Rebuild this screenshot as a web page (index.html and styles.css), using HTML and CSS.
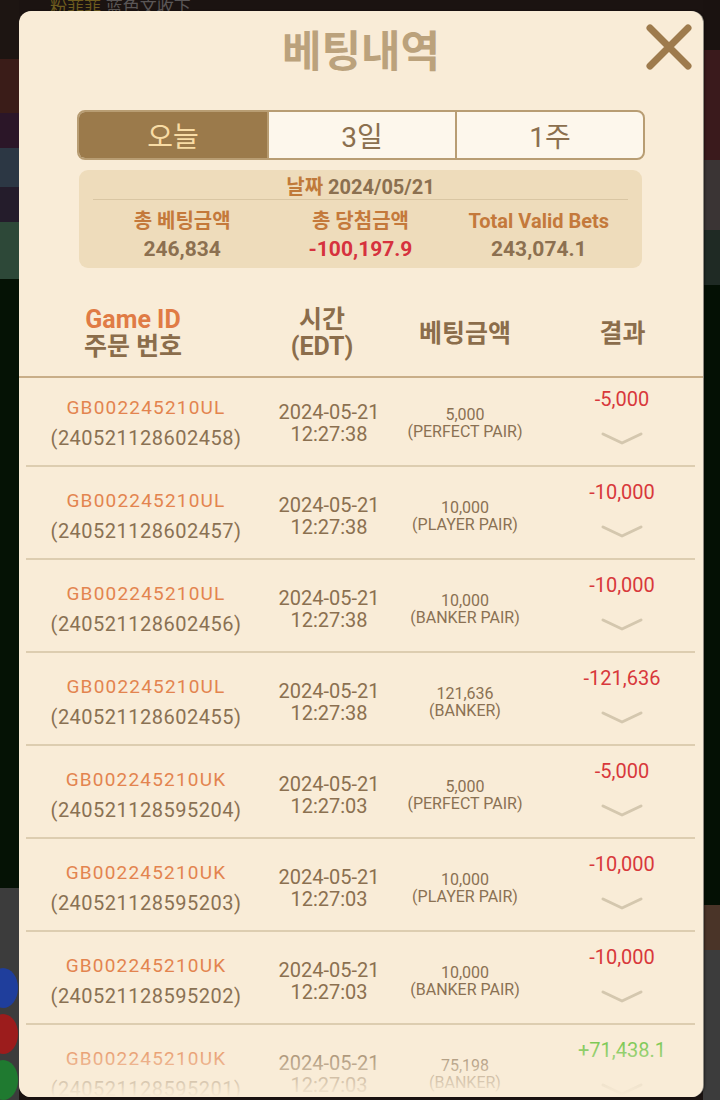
FILE: index.html
```html
<!DOCTYPE html>
<html lang="ko">
<head>
<meta charset="utf-8">
<title>베팅내역</title>
<link rel="stylesheet" href="styles.css">
</head>
<body>
<div class="backdrop">
  <div class="strip strip-left">
    <div class="b b1"></div><div class="b b2"></div><div class="b b3"></div><div class="b b4"></div><div class="b b5"></div><div class="b b6"></div><div class="b b7"></div>
    <div class="b b8">
      <span class="dot dot-blue"></span><span class="dot dot-red"></span><span class="dot dot-green"></span>
    </div>
  </div>
  <div class="strip strip-mid">
    <div class="topline"><span class="cn-yellow">粉菲菲</span> <span class="cn-grey">蓝色文收下</span></div>
  </div>
  <div class="strip strip-right">
    <div class="r r1"></div><div class="r r2"></div><div class="r r3"></div><div class="r r4"></div><div class="r r5"></div><div class="r r6"></div><div class="r r7"></div>
  </div>
</div>

<div class="modal">
  <div class="title">베팅내역</div>
  <button class="close" aria-label="close">
    <svg width="48" height="48" viewBox="0 0 48 48"><path d="M5 5 L43 43 M43 5 L5 43" stroke="#9e7b4d" stroke-width="7" stroke-linecap="round" fill="none"/></svg>
  </button>

  <div class="tabs">
    <div class="tab active">오늘</div>
    <div class="tab">3일</div>
    <div class="tab">1주</div>
  </div>

  <div class="summary">
    <div class="sum-date"><span class="lbl">날짜</span> <span class="val">2024/05/21</span></div>
    <div class="sum-grid">
      <div class="lbl">총 베팅금액</div>
      <div class="lbl">총 당첨금액</div>
      <div class="lbl">Total Valid Bets</div>
      <div class="val">246,834</div>
      <div class="val neg">-100,197.9</div>
      <div class="val">243,074.1</div>
    </div>
  </div>

  <div class="thead">
    <div class="th"><span class="orange">Game ID</span><span>주문 번호</span></div>
    <div class="th"><span>시간</span><span>(EDT)</span></div>
    <div class="th"><span>베팅금액</span></div>
    <div class="th th-res"><span>결과</span></div>
  </div>

  <div class="list">
    <div class="list-inner">
      <div class="row">
        <div class="c1"><span class="gid">GB002245210UL</span><span class="oid">(240521128602458)</span></div>
        <div class="c2"><span>2024-05-21</span><span>12:27:38</span></div>
        <div class="c3"><span>5,000</span><span>(PERFECT PAIR)</span></div>
        <div class="c4"><span class="res neg">-5,000</span><svg class="chev" width="42" height="13" viewBox="0 0 42 13"><path d="M2 2 L21 11 L40 2" stroke="#d4c7ae" stroke-width="3" fill="none" stroke-linecap="round" stroke-linejoin="round"/></svg></div>
      </div>
      <div class="row">
        <div class="c1"><span class="gid">GB002245210UL</span><span class="oid">(240521128602457)</span></div>
        <div class="c2"><span>2024-05-21</span><span>12:27:38</span></div>
        <div class="c3"><span>10,000</span><span>(PLAYER PAIR)</span></div>
        <div class="c4"><span class="res neg">-10,000</span><svg class="chev" width="42" height="13" viewBox="0 0 42 13"><path d="M2 2 L21 11 L40 2" stroke="#d4c7ae" stroke-width="3" fill="none" stroke-linecap="round" stroke-linejoin="round"/></svg></div>
      </div>
      <div class="row">
        <div class="c1"><span class="gid">GB002245210UL</span><span class="oid">(240521128602456)</span></div>
        <div class="c2"><span>2024-05-21</span><span>12:27:38</span></div>
        <div class="c3"><span>10,000</span><span>(BANKER PAIR)</span></div>
        <div class="c4"><span class="res neg">-10,000</span><svg class="chev" width="42" height="13" viewBox="0 0 42 13"><path d="M2 2 L21 11 L40 2" stroke="#d4c7ae" stroke-width="3" fill="none" stroke-linecap="round" stroke-linejoin="round"/></svg></div>
      </div>
      <div class="row">
        <div class="c1"><span class="gid">GB002245210UL</span><span class="oid">(240521128602455)</span></div>
        <div class="c2"><span>2024-05-21</span><span>12:27:38</span></div>
        <div class="c3"><span>121,636</span><span>(BANKER)</span></div>
        <div class="c4"><span class="res neg">-121,636</span><svg class="chev" width="42" height="13" viewBox="0 0 42 13"><path d="M2 2 L21 11 L40 2" stroke="#d4c7ae" stroke-width="3" fill="none" stroke-linecap="round" stroke-linejoin="round"/></svg></div>
      </div>
      <div class="row">
        <div class="c1"><span class="gid">GB002245210UK</span><span class="oid">(240521128595204)</span></div>
        <div class="c2"><span>2024-05-21</span><span>12:27:03</span></div>
        <div class="c3"><span>5,000</span><span>(PERFECT PAIR)</span></div>
        <div class="c4"><span class="res neg">-5,000</span><svg class="chev" width="42" height="13" viewBox="0 0 42 13"><path d="M2 2 L21 11 L40 2" stroke="#d4c7ae" stroke-width="3" fill="none" stroke-linecap="round" stroke-linejoin="round"/></svg></div>
      </div>
      <div class="row">
        <div class="c1"><span class="gid">GB002245210UK</span><span class="oid">(240521128595203)</span></div>
        <div class="c2"><span>2024-05-21</span><span>12:27:03</span></div>
        <div class="c3"><span>10,000</span><span>(PLAYER PAIR)</span></div>
        <div class="c4"><span class="res neg">-10,000</span><svg class="chev" width="42" height="13" viewBox="0 0 42 13"><path d="M2 2 L21 11 L40 2" stroke="#d4c7ae" stroke-width="3" fill="none" stroke-linecap="round" stroke-linejoin="round"/></svg></div>
      </div>
      <div class="row">
        <div class="c1"><span class="gid">GB002245210UK</span><span class="oid">(240521128595202)</span></div>
        <div class="c2"><span>2024-05-21</span><span>12:27:03</span></div>
        <div class="c3"><span>10,000</span><span>(BANKER PAIR)</span></div>
        <div class="c4"><span class="res neg">-10,000</span><svg class="chev" width="42" height="13" viewBox="0 0 42 13"><path d="M2 2 L21 11 L40 2" stroke="#d4c7ae" stroke-width="3" fill="none" stroke-linecap="round" stroke-linejoin="round"/></svg></div>
      </div>
      <div class="row">
        <div class="c1"><span class="gid">GB002245210UK</span><span class="oid">(240521128595201)</span></div>
        <div class="c2"><span>2024-05-21</span><span>12:27:03</span></div>
        <div class="c3"><span>75,198</span><span>(BANKER)</span></div>
        <div class="c4"><span class="res pos">+71,438.1</span><svg class="chev" width="42" height="13" viewBox="0 0 42 13"><path d="M2 2 L21 11 L40 2" stroke="#d4c7ae" stroke-width="3" fill="none" stroke-linecap="round" stroke-linejoin="round"/></svg></div>
      </div>
    </div>
  </div>
  <div class="fade"></div>
</div>
</body>
</html>
```

FILE: styles.css
```css
* { box-sizing: border-box; }
html, body { margin: 0; padding: 0; }
body {
  width: 720px;
  height: 1100px;
  overflow: hidden;
  position: relative;
  background: #061206;
  font-family: Roboto, "Noto Sans CJK KR", "Noto Sans", sans-serif;
}

/* ---------- blurred game backdrop ---------- */
.backdrop {
  display: flex;
  width: 720px;
  height: 1100px;
}
.strip { display: flex; flex-direction: column; }
.strip-left { width: 19px; }
.strip-mid { flex: 1; background: #1b1311; }
.strip-right { width: 17px; }

.b1 { height: 60px; background: #1d1512; }
.b2 { height: 55px; background: #3a1c18; }
.b3 { height: 35px; background: #2b1628; }
.b4 { height: 40px; background: #2c3744; }
.b5 { height: 35px; background: #241c2b; }
.b6 { height: 58px; background: #2d4838; }
.b7 { height: 617px; background: #051205; }
.b8 {
  flex: 1;
  background: #3c3c3c;
  display: flex;
  flex-direction: column;
  align-items: flex-start;
  padding-top: 80px;
  gap: 6px;
}
.dot { display: block; width: 30px; height: 40px; border-radius: 50%; margin-left: -12px; }
.dot-blue { background: #1f3e9c; }
.dot-red { background: #9c1c1c; }
.dot-green { background: #1f7a30; }

.r1 { height: 50px; background: #1a1210; }
.r2 { height: 110px; background: #3a1a1c; }
.r3 { height: 70px; background: #3a3434; }
.r4 { height: 55px; background: #1f2a24; }
.r5 { height: 620px; background: #041004; }
.r6 { height: 45px; background: #4a3428; }
.r7 { flex: 1; background: #3c3c3c; }

.topline {
  padding: 0 0 0 31px;
  margin-top: -4px;
  font-family: "Noto Sans CJK SC", sans-serif;
  font-size: 17px;
  line-height: 20px;
}
.cn-yellow { color: #6e5c1e; }
.cn-grey { color: #5a5656; }

/* ---------- modal ---------- */
.modal {
  position: absolute;
  left: 19px;
  top: 11px;
  width: 684px;
  height: 1086px;
  background: #f9ecd7;
  border-radius: 12px;
  overflow: hidden;
  box-shadow: 1px 0 0 #8f8a80, 2px 0 2px rgba(0,0,0,0.4);
}

.title {
  height: 74px;
  line-height: 74px;
  text-align: center;
  font-family: "Noto Sans CJK KR", sans-serif;
  font-size: 43px;
  font-weight: 700;
  color: #bba27c;
}

.close {
  position: absolute;
  right: 10px;
  top: 12px;
  width: 48px;
  height: 48px;
  padding: 0;
  border: 0;
  background: transparent;
}
.close svg { display: block; }

/* tabs */
.tabs {
  margin: 25px 58px 0 58px;
  height: 50px;
  display: grid;
  grid-template-columns: 1fr 1fr 1fr;
  border: 2px solid #b89d73;
  border-radius: 8px;
  overflow: hidden;
  background: #fdf7ec;
}
.tab {
  display: flex;
  align-items: center;
  justify-content: center;
  font-size: 28px;
  color: #8b6f4e;
  border-left: 2px solid #b89d73;
}
.tab:first-child { border-left: 0; }
.tab.active { background: #9b7a4b; color: #f8dca5; }

/* summary */
.summary {
  margin: 10px 61px 0 60px;
  height: 98px;
  background: #eedcbb;
  border-radius: 9px;
  padding: 5px 14px 0 14px;
}
.sum-date {
  height: 24px;
  line-height: 24px;
  text-align: center;
  font-size: 20px;
  font-weight: 700;
  border-bottom: 1px solid #d9c6a3;
  margin-bottom: 8px;
  box-sizing: content-box;
}
.sum-date .lbl { color: #c07a3a; }
.sum-date .val { color: #8b7050; }
.sum-grid {
  display: grid;
  grid-template-columns: 1fr 1fr 1fr;
  grid-template-rows: 27px 28px;
  text-align: center;
  font-weight: 700;
  font-size: 20px;
}
.sum-grid .lbl { color: #c4793b; line-height: 27px; }
.sum-grid .val { color: #8c7050; line-height: 28px; font-size: 21px; }
.sum-grid .val.neg { color: #d6323e; }

/* table header */
.thead {
  margin-top: 22px;
  height: 86px;
  padding: 0 8px 0 7px;
  display: grid;
  grid-template-columns: 214px 164px 122px 169px;
  font-weight: 700;
  color: #8b6d4b;
}
.th {
  display: flex;
  flex-direction: column;
  align-items: center;
  justify-content: center;
  font-size: 25px;
  line-height: 27px;
}
.th .orange { color: #e07b45; }
.th-res { padding-left: 24px; }

/* list */
.list {
  border-top: 2px solid #c9ae88;
  padding: 0 8px 0 7px;
  overflow: hidden;
}
.list-inner { margin-top: -4px; }
.row {
  height: 93px;
  border-bottom: 2px solid #ddcdb0;
  display: grid;
  grid-template-columns: 240px 126px 146px 157px;
  padding-top: 6px;
  color: #8a7153;
}
.c1, .c2, .c3 {
  display: flex;
  flex-direction: column;
  align-items: center;
  justify-content: center;
  white-space: nowrap;
}
.c1 { line-height: 30px; }
.gid { color: #e3844f; font-size: 19px; letter-spacing: 1.2px; }
.oid { font-size: 20px; letter-spacing: 0.5px; }
.c2 { font-size: 20px; line-height: 22px; color: #8b7050; }
.c3 { font-size: 16px; line-height: 17px; }
.c4 {
  padding-left: 11px;
  padding-top: 6px;
  display: flex;
  flex-direction: column;
  align-items: center;
}
.res { font-size: 20px; line-height: 26px; }
.res.neg { color: #d8383b; }
.res.pos { color: #6cc444; }
.chev { display: block; margin-top: 20px; }

.fade {
  position: absolute;
  left: 0;
  right: 0;
  bottom: 0;
  height: 62px;
  background: linear-gradient(to bottom, rgba(249,236,215,0) 0%, rgba(249,236,215,0.35) 35%, rgba(249,236,215,0.7) 75%, #f9ecd7 100%);
}
```
